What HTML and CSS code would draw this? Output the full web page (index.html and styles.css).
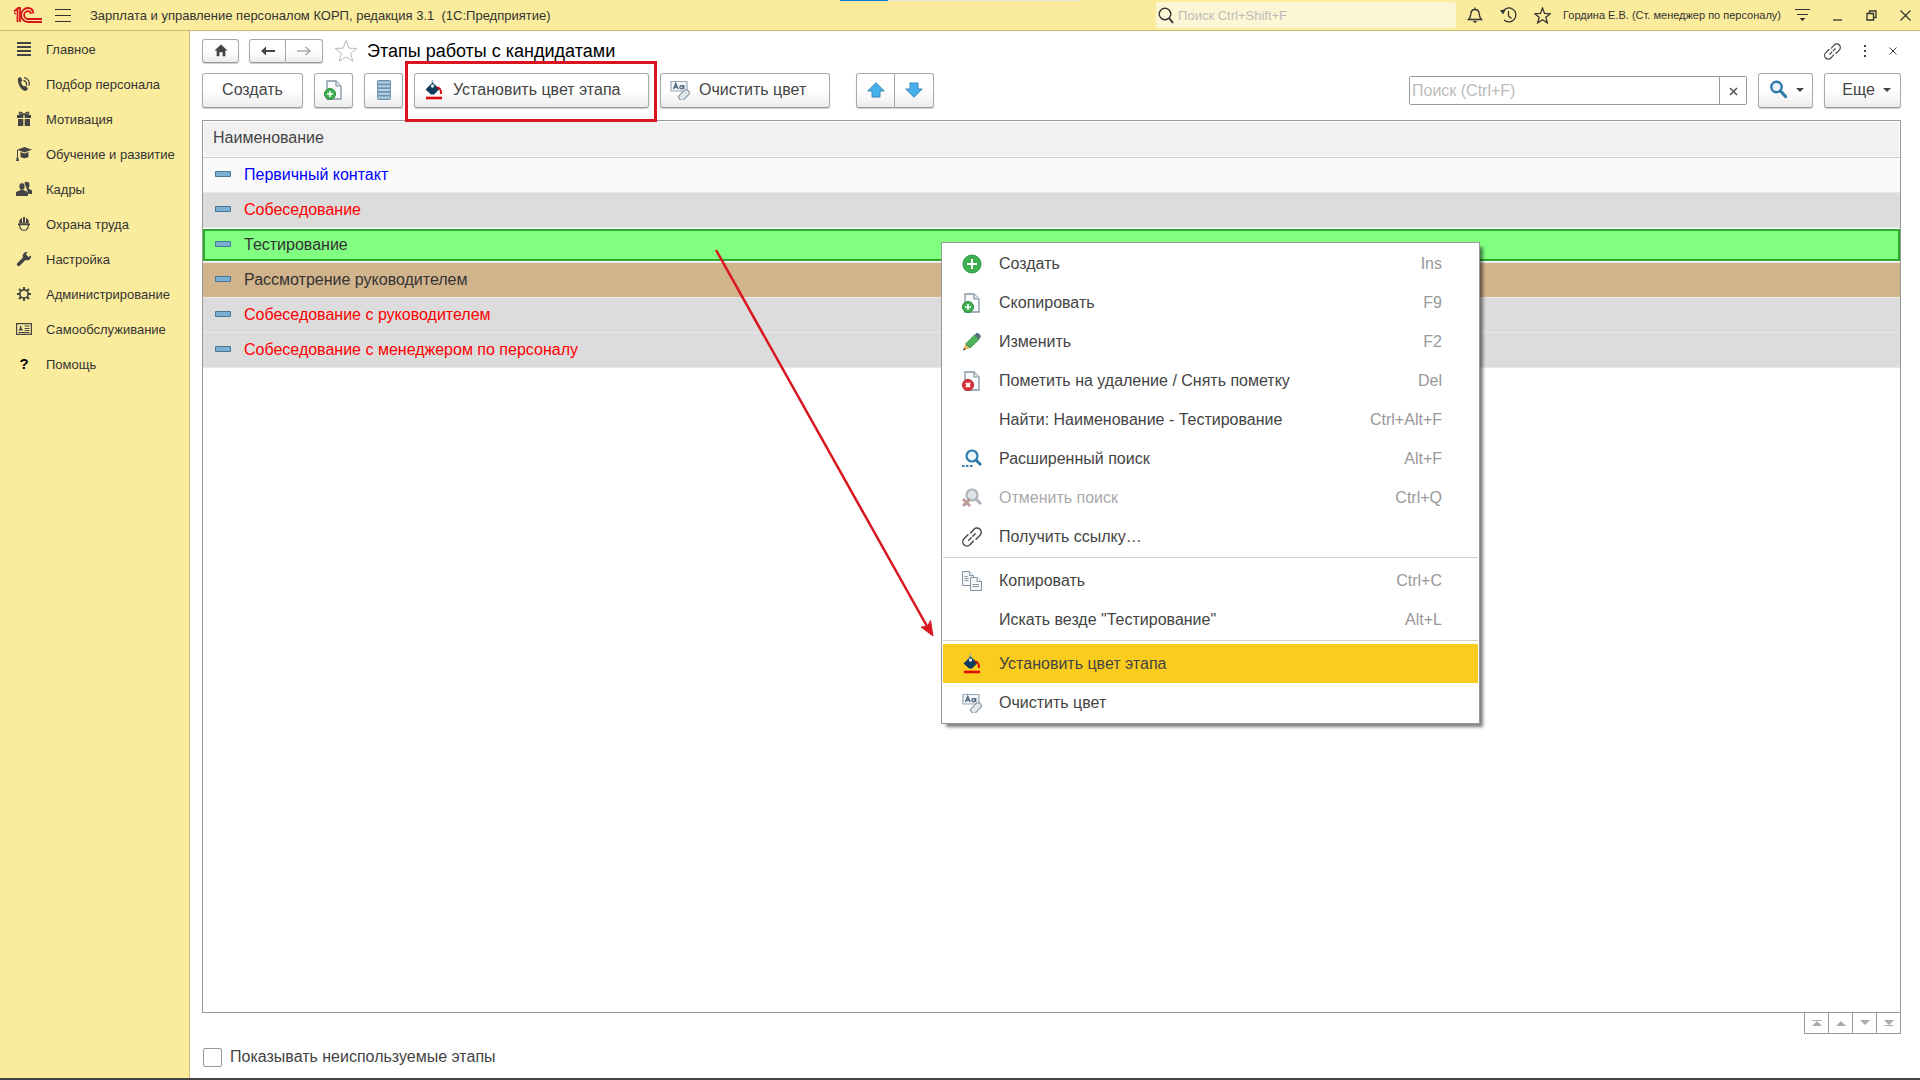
FILE: index.html
```
<!DOCTYPE html>
<html lang="ru">
<head>
    <meta charset="UTF-8">
    <meta name="viewport" content="width=device-width, initial-scale=1.0">
    <title>Этапы работы с кандидатами</title>
    <link rel="stylesheet" href="styles.css">
</head>
<body>
    <!-- Shared icons -->
    <svg class="sprite" aria-hidden="true">
        <symbol id="i-doc-add" viewBox="0 0 20 20">
            <path d="M3 1h9l5 5v13H3z" fill="#f7f9fb" stroke="#8795a3" stroke-width="1.3"/>
            <path d="M12 1v5h5" fill="#dfe5ea" stroke="#8795a3" stroke-width="1.2"/>
            <circle cx="6" cy="14" r="5.5" fill="#3fb04f" stroke="#2b8a3a"/>
            <path d="M6 11v6M3 14h6" stroke="#fff" stroke-width="1.6"/>
        </symbol>
        <symbol id="i-doc-del" viewBox="0 0 20 20">
            <path d="M3 1h9l5 5v13H3z" fill="#f7f9fb" stroke="#8795a3" stroke-width="1.3"/>
            <path d="M12 1v5h5" fill="#dfe5ea" stroke="#8795a3" stroke-width="1.2"/>
            <circle cx="6" cy="14" r="5.5" fill="#d8323a" stroke="#b3202a"/>
            <path d="M4 12l4 4M8 12l-4 4" stroke="#fff" stroke-width="1.8"/>
        </symbol>
        <symbol id="i-fill" viewBox="0 0 20 20">
            <path d="M8.500 0v5" stroke="#9fb4c4" stroke-width="1.600"/>
            <path d="M8.500 2.500L15.500 9 10 14.500H7L1.500 9.500z" fill="#0f3b5f"/>
            <circle cx="8.500" cy="6" r="1.700" fill="#dfe8ef"/>
            <path d="M13 7.500c3 0 4 1.500 4 6.500" fill="none" stroke="#e00b0b" stroke-width="2"/>
            <path d="M2 18h16" stroke="#e00b0b" stroke-width="2.600"/>
        </symbol>
        <symbol id="i-clear" viewBox="0 0 20 20">
            <path d="M1 1.500h16v9.500H1z" fill="#f2f5f8" stroke="#9aa9b8" stroke-width="1.200"/>
            <path d="M3.500 9L5.800 3.500 8 9M4.300 7.300h3" fill="none" stroke="#566b80" stroke-width="1.500"/>
            <circle cx="11.500" cy="7.300" r="1.600" fill="none" stroke="#566b80" stroke-width="1.400"/>
            <path d="M13.700 5v4" stroke="#566b80" stroke-width="1.400"/>
            <rect x="8" y="12" width="12" height="6" rx="2.500" transform="rotate(-45 14 15)" fill="#e3e8ed" stroke="#8b98a6" stroke-width="1.200"/>
        </symbol>
        <symbol id="i-link" viewBox="0 0 20 20">
            <g fill="none" stroke="#444" stroke-width="1.400" stroke-linecap="round">
                <path d="M8.700 6l3.300-3.700a4.200 4.200 0 0 1 6 6L14 12.300"/>
                <path d="M11.300 14L8 17.700a4.200 4.200 0 0 1-6-6L6 7.700"/>
                <path d="M6.800 13.200l2.400-2.400M10.800 9.200l2.400-2.400"/>
            </g>
        </symbol>
        <symbol id="i-star" viewBox="0 0 24 24">
            <path d="M12 1.500l2.900 7.600 8 .4-6.200 5 2.100 7.900-6.800-4.500-6.800 4.500 2.100-7.900-6.200-5 8-.4z" fill="none" stroke="currentColor"/>
        </symbol>
        <symbol id="i-lens" viewBox="0 0 20 20">
            <circle cx="8.500" cy="7" r="5.200" fill="#eaf4fb" stroke="currentColor" stroke-width="2.400"/>
            <path d="M12.500 11l5 5.500" stroke="currentColor" stroke-width="3.200" stroke-linecap="round"/>
        </symbol>
        <symbol id="i-item" viewBox="0 0 16 6">
            <path d="M.5.5h15v5H.5z" fill="#7aaed3" stroke="#4b7594"/>
        </symbol>
    </svg>

    <header class="topbar">
        <svg class="logo" viewBox="0 0 29 16" aria-label="1С">
            <g fill="none" stroke="#d8151b" stroke-width="1.800">
                <path d="M1 4.500L4.500 1.500V15M1.500 7l1-1M7 15V1H5"/>
                <path d="M20.500 6.500C20 3 17.500 1 15 1a7 7 0 0 0 0 14h14"/>
                <path d="M18 7a3.200 3.200 0 0 0-3-2.800 3.900 3.900 0 0 0 0 7.800h14"/>
            </g>
        </svg>
        <button class="icon-btn burger" aria-label="Меню">
            <svg width="16" height="14" viewBox="0 0 16 14"><path d="M0 1.500h16M0 7.500h16M0 13.500h16" stroke="#333"/></svg>
        </button>
        <span class="app-title">Зарплата и управление персоналом КОРП, редакция 3.1&nbsp; (1С:Предприятие)</span>
        <label class="global-search">
            <svg width="16" height="17" viewBox="0 0 16 17"><circle cx="7" cy="7" r="5.800" fill="none" stroke="#333" stroke-width="1.400"/><path d="M11 11l4 5" stroke="#333" stroke-width="2"/></svg>
            <input type="text" placeholder="Поиск Ctrl+Shift+F" aria-label="Поиск">
        </label>
        <div class="top-icons">
            <button class="icon-btn" aria-label="Уведомления">
                <svg width="16" height="16" viewBox="0 0 16 16"><path d="M8 .5v2M1.500 12.500c2-2 2-3 2.300-5.500C4 4 5.500 2.500 8 2.500S12 4 12.200 7c.3 2.500.3 3.500 2.300 5.500z" fill="none" stroke="#333" stroke-width="1.300"/><path d="M5.500 14h5L8 16z" fill="#333"/></svg>
            </button>
            <button class="icon-btn" aria-label="История">
                <svg width="17" height="16" viewBox="0 0 17 16"><path d="M2.500 5A7 7 0 1 1 4 13" fill="none" stroke="#333" stroke-width="1.300"/><path d="M0 3l5.500 0L3 7.500z" fill="#333"/><path d="M8.500 4v5l3 2.500" fill="none" stroke="#333" stroke-width="1.300"/></svg>
            </button>
            <button class="icon-btn" aria-label="Избранное">
                <svg width="17" height="17"><use href="#i-star" stroke-width="1.800"/></svg>
            </button>
        </div>
        <span class="user">Гордина Е.В. (Ст. менеджер по персоналу)</span>
        <button class="icon-btn" aria-label="Настройки панели">
            <svg width="15" height="14" viewBox="0 0 15 14"><path d="M0 1.500h15M2 6.500h11" stroke="#333" stroke-width="1.200"/><path d="M4.500 10h6L7.500 13z" fill="#333"/></svg>
        </button>
        <div class="window-btns">
            <button class="icon-btn" aria-label="Свернуть"><svg width="11" height="11" viewBox="0 0 11 11"><path d="M1 10h9" stroke="#333" stroke-width="1.300"/></svg></button>
            <button class="icon-btn" aria-label="Развернуть"><svg width="11" height="11" viewBox="0 0 11 11"><path d="M1 3.500h6.500V10H1zM3.500 3V1H10v6.500H8" fill="none" stroke="#333" stroke-width="1.300"/></svg></button>
            <button class="icon-btn" aria-label="Закрыть"><svg width="11" height="11" viewBox="0 0 11 11"><path d="M.5.5l10 10M10.500.5l-10 10" stroke="#333" stroke-width="1.200"/></svg></button>
        </div>
        <div class="progress"></div>
    </header>

    <div class="layout">
        <nav class="sidebar">
            <a href="#"><svg viewBox="0 0 16 16"><path d="M1 2h14M1 6h14M1 10h14M1 14h14" stroke="#444" stroke-width="2"/></svg>Главное</a>
            <a href="#"><svg viewBox="0 0 16 16"><path d="M2 2l2.500-1L6.500 4.500 5 6c.5 2 1.500 3.500 3 4.500l1.700-.8 2.300 3L10 15C5 15 1 7 2 2z" fill="#444"/><path d="M7.500 4.500a4 4 0 0 1 3 5M8 1.700a6 6 0 0 1 5 8" fill="none" stroke="#444" stroke-width="1.300"/></svg>Подбор персонала</a>
            <a href="#"><svg viewBox="0 0 16 16"><path d="M1 4h6.300v3H1zM8.700 4H15v3H8.700zM2 8h5.300v7H2zM8.700 8H14v7H8.700z" fill="#444"/><path d="M7.500 3.500C6 1 4 .8 3.300 2s1 1.500 4 1.500zM8.500 3.500C10 1 12 .8 12.700 2s-1 1.500-4 1.500z" fill="none" stroke="#444" stroke-width="1.300"/></svg>Мотивация</a>
            <a href="#"><svg viewBox="0 0 16 16"><path d="M8.500 1L16 3.800 8.500 6.500 1 3.800z" fill="#444"/><path d="M4.500 6l4 1.500 4-1.500v5c-2 1.500-6 1.500-8 0z" fill="#444"/><path d="M1.500 4v8" stroke="#444"/><path d="M0 15l.7-3.500h1.600L3 15z" fill="#444"/></svg>Обучение и развитие</a>
            <a href="#"><svg viewBox="0 0 16 16"><path d="M8.500 2C9 0 14 0 13.500 4c0 2-1 3-1 3.500L16 9.500V13h-3.500z" fill="#444"/><ellipse cx="6" cy="5.500" rx="3" ry="3.700" fill="#444" stroke="#faec9c" stroke-width=".6"/><path d="M0 15v-3.500C1 10 4 9.700 4.500 9h3c.5.700 3.500 1 4.500 2.500V15z" fill="#444"/></svg>Кадры</a>
            <a href="#"><svg viewBox="0 0 16 16"><path d="M3 7.500C3 4 4.500 2.300 6 2v4.500h1V1h2v5.500h1V2c1.500.3 3 2 3 5.500z" fill="#444"/><path d="M2 7.500h12v1.700H2z" fill="#444"/><path d="M3.500 9c.5 7 8.500 7 9 0" fill="none" stroke="#444" stroke-width="1.200"/></svg>Охрана труда</a>
            <a href="#"><svg viewBox="0 0 16 16"><path d="M15 4.500A4 4 0 0 1 9.500 9L4 14.500A1.700 1.700 0 0 1 1.400 12L7 6.500A4 4 0 0 1 11.500 1L10 3.500 12.500 6z" fill="#444"/></svg>Настройка</a>
            <a href="#"><svg viewBox="0 0 16 16"><circle cx="8" cy="8" r="4.200" fill="none" stroke="#444" stroke-width="1.800"/><path d="M8 1v2.500M8 12.500V15M1 8h2.500M12.500 8H15M3 3l1.800 1.800M11.200 11.200L13 13M13 3l-1.800 1.800M4.800 11.200L3 13" stroke="#444" stroke-width="2"/></svg>Администрирование</a>
            <a href="#"><svg viewBox="0 0 16 16"><path d="M.6 2.600h14.800v10.800H.6z" fill="none" stroke="#444" stroke-width="1.200"/><path d="M2.500 9.500C2.500 8 4 8 4 7 3 4 6 4 5.500 7c0 1 1.500 1 1.500 2.500z" fill="#444"/><path d="M8.500 5h5M8.500 7.500h5M8.500 9.500h5M2.500 11.500h11" stroke="#444"/></svg>Самообслуживание</a>
            <a href="#"><span class="q">?</span>Помощь</a>
        </nav>

        <main class="content">
            <div class="title-row">
                <button class="btn small home" aria-label="Домой"><svg width="14" height="13" viewBox="0 0 16 14"><path d="M8 0l7.500 7H13v6.500H9.800V9H6.200v4.500H3V7H.5z" fill="#444"/></svg></button>
                <div class="group">
                    <button class="btn small" aria-label="Назад"><svg width="14" height="10" viewBox="0 0 14 10"><path d="M0 5l5-4.500V4h9v2H5v3.500z" fill="#444"/></svg></button>
                    <button class="btn small" aria-label="Вперед"><svg width="14" height="10" viewBox="0 0 14 10"><path d="M0 5h12M8.500 1L13 5 8.500 9" fill="none" stroke="#aaa" stroke-width="1.600"/></svg></button>
                </div>
                <button class="icon-btn fav" aria-label="В избранное"><svg width="24" height="24"><use href="#i-star"/></svg></button>
                <h1>Этапы работы с кандидатами</h1>
                <div class="page-tools">
                    <button class="icon-btn" aria-label="Получить ссылку"><svg width="17" height="17"><use href="#i-link"/></svg></button>
                    <button class="icon-btn" aria-label="Еще"><svg width="4" height="12" viewBox="0 0 4 12"><path d="M1 0h2v2H1zM1 5h2v2H1zM1 10h2v2H1z" fill="#444"/></svg></button>
                    <button class="icon-btn" aria-label="Закрыть"><svg width="8" height="8" viewBox="0 0 8 8"><path d="M.5.5l7 7M7.500.5l-7 7" stroke="#444"/></svg></button>
                </div>
            </div>

            <div class="toolbar">
                <button class="btn create">Создать</button>
                <button class="btn square" aria-label="Скопировать"><svg width="20" height="20"><use href="#i-doc-add"/></svg></button>
                <button class="btn square" aria-label="Список"><svg width="14" height="20" viewBox="0 0 14 20"><rect width="14" height="20" rx="2" fill="#6d93b0"/><path d="M1 2.500h12M1 6.300h12M1 10h12M1 13.800h12M1 17.500h12" stroke="#b5d0e3" stroke-width="2"/></svg></button>
                <div class="marked">
                    <button class="btn with-icon set-color"><svg width="20" height="20"><use href="#i-fill"/></svg>Установить цвет этапа</button>
                </div>
                <button class="btn with-icon clear-color"><svg width="20" height="20"><use href="#i-clear"/></svg>Очистить цвет</button>
                <div class="group move">
                    <button class="btn" aria-label="Переместить вверх"><svg width="18" height="16" viewBox="0 0 18 16"><path d="M9 .7L17.300 9H13v6H5V9H.7z" fill="#45b0ee" stroke="#3b86b5"/></svg></button>
                    <button class="btn" aria-label="Переместить вниз"><svg width="18" height="16" viewBox="0 0 18 16"><path d="M9 15.300L17.300 7H13V1H5v6H.7z" fill="#45b0ee" stroke="#3b86b5"/></svg></button>
                </div>
                <div class="search">
                    <input type="text" placeholder="Поиск (Ctrl+F)" aria-label="Поиск по списку">
                    <button aria-label="Очистить"><svg width="9" height="9" viewBox="0 0 9 9"><path d="M1 1l7 7M8 1L1 8" stroke="#555" stroke-width="1.600"/></svg></button>
                </div>
                <button class="btn find" aria-label="Найти"><svg class="blue" width="20" height="20"><use href="#i-lens"/></svg><span class="caret"></span></button>
                <button class="btn more">Еще<span class="caret"></span></button>
            </div>

            <div class="list">
                <table>
                    <thead>
                        <tr><th>Наименование</th></tr>
                    </thead>
                    <tbody>
                        <tr class="first"><td><svg><use href="#i-item"/></svg>Первичный контакт</td></tr>
                        <tr class="gray"><td><svg><use href="#i-item"/></svg>Собеседование</td></tr>
                        <tr class="current"><td><div><svg><use href="#i-item"/></svg>Тестирование</div></td></tr>
                        <tr class="brown"><td><svg><use href="#i-item"/></svg>Рассмотрение руководителем</td></tr>
                        <tr class="gray"><td><svg><use href="#i-item"/></svg>Собеседование с руководителем</td></tr>
                        <tr class="gray"><td><svg><use href="#i-item"/></svg>Собеседование с менеджером по персоналу</td></tr>
                    </tbody>
                </table>
            </div>
            <div class="pager">
                <button aria-label="В начало"><svg width="10" height="6" viewBox="0 0 10 6"><path d="M.5 0h9v1h-9zM5 1l5 5H0z" fill="#aaa"/></svg></button>
                <button aria-label="Вверх"><svg width="10" height="6" viewBox="0 0 10 6"><path d="M5 1l5 5H0z" fill="#aaa"/></svg></button>
                <button aria-label="Вниз"><svg width="10" height="6" viewBox="0 0 10 6"><path d="M5 5l5-5H0z" fill="#aaa"/></svg></button>
                <button aria-label="В конец"><svg width="10" height="6" viewBox="0 0 10 6"><path d="M5 5l5-5H0zM.5 5h9v1h-9z" fill="#aaa"/></svg></button>
            </div>
            <label class="unused"><input type="checkbox">Показывать неиспользуемые этапы</label>
        </main>
    </div>

    <!-- Context menu of the list -->
    <div class="menu" role="menu">
        <button role="menuitem"><svg viewBox="0 0 20 20"><circle cx="10" cy="10" r="9" fill="#3fb04f" stroke="#2b9a40"/><path d="M10 5v10M5 10h10" stroke="#fff" stroke-width="2"/></svg>Создать<kbd>Ins</kbd></button>
        <button role="menuitem"><svg><use href="#i-doc-add"/></svg>Скопировать<kbd>F9</kbd></button>
        <button role="menuitem"><svg viewBox="0 0 20 20"><path d="M1 18.500l2.500-6.500 4.500 4z" fill="#e9b860"/><path d="M1 18.500l1-2.700 1.700 1.600z" fill="#444"/><path d="M3.500 12L12.500 3l4.500 4.500L8 16z" fill="#4db35a" stroke="#37853f" stroke-width=".8"/><path d="M12.500 3L14.500 1c1-1 5 2.500 4.200 4L17 7.500z" fill="#5b6b7a"/></svg>Изменить<kbd>F2</kbd></button>
        <button role="menuitem"><svg><use href="#i-doc-del"/></svg>Пометить на удаление / Снять пометку<kbd>Del</kbd></button>
        <button role="menuitem"><svg></svg>Найти: Наименование - Тестирование<kbd>Ctrl+Alt+F</kbd></button>
        <button role="menuitem"><svg viewBox="0 0 20 20"><circle cx="10" cy="7" r="5.500" fill="#eaf4fb" stroke="#2f79ab" stroke-width="2.200"/><path d="M14 11l5 5" stroke="#2f79ab" stroke-width="3"/><path d="M0 17h2.500M4 17h2.500M8 17h2.500" stroke="#2f79ab" stroke-width="2"/></svg>Расширенный поиск<kbd>Alt+F</kbd></button>
        <button role="menuitem" class="off"><svg viewBox="0 0 20 20"><circle cx="10" cy="7" r="5.500" fill="#dfe5ea" stroke="#adb3b9" stroke-width="2.200"/><path d="M14 11l5 5" stroke="#adb3b9" stroke-width="3"/><path d="M1 11l7 7M8 11l-7 7" stroke="#c09a9a" stroke-width="3"/></svg>Отменить поиск<kbd>Ctrl+Q</kbd></button>
        <button role="menuitem"><svg><use href="#i-link"/></svg>Получить ссылку…</button>
        <hr>
        <button role="menuitem"><svg viewBox="0 0 20 20"><g fill="#f4f7f9" stroke="#8795a3"><path d="M.5.500h7l4 4v10H.5z"/><path d="M7.500.500v4h4"/><path d="M2.500 5.500h3M2.500 7.500h4M2.500 9.500h4"/><path d="M8.500 6.500h6.500l4.500 4v9h-11z"/><path d="M15 6.500v4h4.500"/><path d="M10.500 13.500h6.500M10.500 15.500h6.500"/></g></svg>Копировать<kbd>Ctrl+C</kbd></button>
        <button role="menuitem"><svg></svg>Искать везде "Тестирование"<kbd>Alt+L</kbd></button>
        <hr>
        <button role="menuitem" class="active"><svg><use href="#i-fill"/></svg>Установить цвет этапа</button>
        <button role="menuitem"><svg><use href="#i-clear"/></svg>Очистить цвет</button>
    </div>

    <!-- Pointer from the row to the menu item -->
    <svg class="arrow" width="222" height="390" viewBox="0 0 222 390" aria-hidden="true">
        <path d="M2 1l212 378" stroke="#d9161f" stroke-width="2.500"/>
        <path d="M219 387l-12-9 6.500-.5 3-6z" fill="#d9161f" stroke="#d9161f"/>
    </svg>
</body>
</html>
```
FILE: styles.css
```
* {
    box-sizing: border-box;
}

body {
    margin: 0;
    min-height: 100vh;
    display: flex;
    flex-direction: column;
    position: relative;
    font-family: "Liberation Sans", Arial, sans-serif;
    font-size: 16px;
    color: #444;
    background: #fff;
    border-bottom: 2px solid #444;
}

button, input {
    font: inherit;
    color: inherit;
}

button {
    padding: 0;
    cursor: pointer;
}

svg {
    flex: none;
}

.sprite {
    position: absolute;
    width: 0;
    height: 0;
}

.icon-btn {
    display: flex;
    align-items: center;
    justify-content: center;
    background: none;
    border: none;
}

/* Top bar */
.topbar {
    position: relative;
    display: flex;
    align-items: center;
    height: 31px;
    padding: 0 9px 0 13px;
    background: #faec9c;
    border-bottom: 1px solid #c8b86a;
    font-size: 13px;
    color: #333;
}

.progress {
    position: absolute;
    top: 0;
    left: 840px;
    width: 241px;
    height: 1px;
    background: linear-gradient(90deg, #0a78d6 20%, #e3e3dc 20%);
}

.logo {
    width: 29px;
    height: 16px;
}

.burger {
    margin: 0 19px 0 13px;
}

.global-search {
    display: flex;
    align-items: center;
    gap: 4px;
    width: 300px;
    height: 26px;
    margin-left: auto;
    padding-left: 2px;
    background: #fdf6d4;
    border-radius: 3px;
}

.global-search input {
    flex: 1;
    min-width: 0;
    padding: 0;
    background: none;
    border: none;
    outline: none;
}

::placeholder {
    color: #bbb;
    opacity: 1;
}

.top-icons {
    display: flex;
    gap: 17px;
    margin: 0 12px 0 11px;
}

.user {
    margin-right: 14px;
    font-size: 11px;
}

.window-btns {
    display: flex;
    gap: 23px;
    margin-left: 22px;
}

.layout {
    flex: 1;
    display: flex;
}

/* Sidebar */
.sidebar {
    flex: none;
    width: 190px;
    padding-top: 1px;
    background: #faec9c;
    border-right: 1px solid #c8bd80;
}

.sidebar a {
    display: flex;
    align-items: center;
    gap: 14px;
    height: 35px;
    padding: 0 0 1px 16px;
    font-size: 13px;
    color: #333;
    text-decoration: none;
}

.sidebar svg, .q {
    width: 16px;
    height: 16px;
}

.q {
    font-size: 15px;
    line-height: 16px;
    font-weight: bold;
    text-align: center;
    color: #000;
}

/* Page */
.content {
    flex: 1;
    min-width: 0;
    display: flex;
    flex-direction: column;
    padding: 8px 19px 11px 12px;
}

.title-row {
    display: flex;
    align-items: center;
    height: 24px;
}

h1 {
    margin: 0 0 0 9px;
    font-size: 18px;
    font-weight: normal;
    color: #000;
}

.btn {
    display: flex;
    align-items: center;
    justify-content: center;
    height: 35px;
    padding-bottom: 1px;
    background: linear-gradient(#fff 50%, #ececec);
    border: 1px solid #aaa;
    border-bottom-color: #999;
    border-radius: 3px;
    box-shadow: 0 1px 1px rgba(0, 0, 0, 0.2);
}

.small {
    width: 37px;
    height: 24px;
}

.group {
    display: flex;
}

.group .btn:first-child {
    border-radius: 3px 0 0 3px;
}

.group .btn:last-child {
    border-left: none;
    border-radius: 0 3px 3px 0;
}

.title-row .group {
    margin: 0 11px 0 10px;
}

.fav {
    color: #b4bac4;
}

.page-tools {
    display: flex;
    gap: 22px;
    margin-left: auto;
    margin-right: 4px;
}

.toolbar {
    display: flex;
    align-items: center;
    gap: 11px;
    height: 35px;
    margin-top: 10px;
}

.create {
    width: 101px;
}

.square {
    width: 39px;
}

.with-icon {
    justify-content: flex-start;
    gap: 9px;
    padding-left: 9px;
}

.set-color {
    width: 235px;
}

.clear-color {
    width: 170px;
}

/* Red frame drawn round the button */
.marked {
    position: relative;
}

.marked::after {
    content: "";
    position: absolute;
    inset: -12px -8px -14px -9px;
    border: 3px solid #d9161f;
    pointer-events: none;
}

.move {
    margin-left: 15px;
}

.move .btn {
    width: 39px;
}

.search {
    display: flex;
    width: 338px;
    height: 29px;
    margin-left: auto;
    border: 1px solid #999;
    border-radius: 2px;
}

.search input {
    flex: 1;
    min-width: 0;
    padding: 0 2px;
    border: none;
    outline: none;
}

.search button {
    width: 27px;
    background: #fff;
    border: none;
    border-left: 1px solid #999;
}

.find {
    width: 55px;
    gap: 8px;
}

.blue {
    color: #2f79ab;
}

.caret {
    border: 4px solid transparent;
    border-top: 4px solid #444;
    border-bottom: none;
}

.more {
    width: 77px;
    gap: 8px;
    padding-left: 8px;
}

/* List */
.list {
    flex: 1;
    margin-top: 12px;
    border: 1px solid #999;
}

table {
    width: 100%;
    border-collapse: collapse;
}

th {
    height: 36px;
    padding: 0 10px 2px;
    background: #f1f1f1;
    border-bottom: 1px solid #ccc;
    box-shadow: inset 0 0 0 1px #fff;
    font-weight: normal;
    text-align: left;
}

td {
    height: 35px;
    padding: 0 12px;
    border-bottom: 1px solid #e8e8e8;
}

td svg {
    width: 16px;
    height: 6px;
    margin-right: 13px;
    vertical-align: 3px;
}

.first {
    background: #fafafa;
    color: #00f;
}

.gray {
    background: #dcdcdc;
    color: #f00;
}

.brown {
    background: #d2b48c;
    color: #333;
}

.current td {
    padding: 0;
    color: #333;
}

.current div {
    height: 32px;
    padding: 0 10px;
    background: #80ff80;
    border: 2px solid #2bad2b;
    line-height: 28px;
}

.pager {
    display: flex;
    justify-content: flex-end;
}

.pager button {
    display: flex;
    align-items: center;
    justify-content: center;
    width: 24px;
    height: 21px;
    background: #fff;
    border: 1px solid #999;
    border-top: none;
    border-right: none;
}

.pager button:last-child {
    width: 25px;
    border-right: 1px solid #999;
}

.unused {
    display: flex;
    align-items: center;
    gap: 8px;
    align-self: flex-start;
    height: 20px;
    margin-top: 13px;
    padding-left: 1px;
}

.unused input {
    appearance: none;
    width: 19px;
    height: 19px;
    margin: 0;
    background: #fff;
    border: 1px solid #999;
    border-radius: 2px;
}

/* Context menu */
.menu {
    position: absolute;
    top: 242px;
    left: 941px;
    width: 539px;
    padding: 1px;
    background: #fff;
    border: 1px solid #999;
    box-shadow: 4px 4px 3px -1px rgba(0, 0, 0, 0.5);
}

.menu button {
    display: flex;
    align-items: center;
    width: 100%;
    height: 39px;
    padding: 0 36px 0 19px;
    background: none;
    border: none;
}

.menu svg {
    width: 20px;
    height: 20px;
    margin-right: 17px;
}

.menu kbd {
    margin-left: auto;
    font-family: inherit;
    color: #999;
}

.menu hr {
    height: 1px;
    margin: 1px 0 3px;
    background: #d5d2c0;
    border: none;
}

.menu .off {
    color: #aaa;
}

.menu .active {
    background: #facc1e;
}

.arrow {
    position: absolute;
    top: 249px;
    left: 714px;
}
```
